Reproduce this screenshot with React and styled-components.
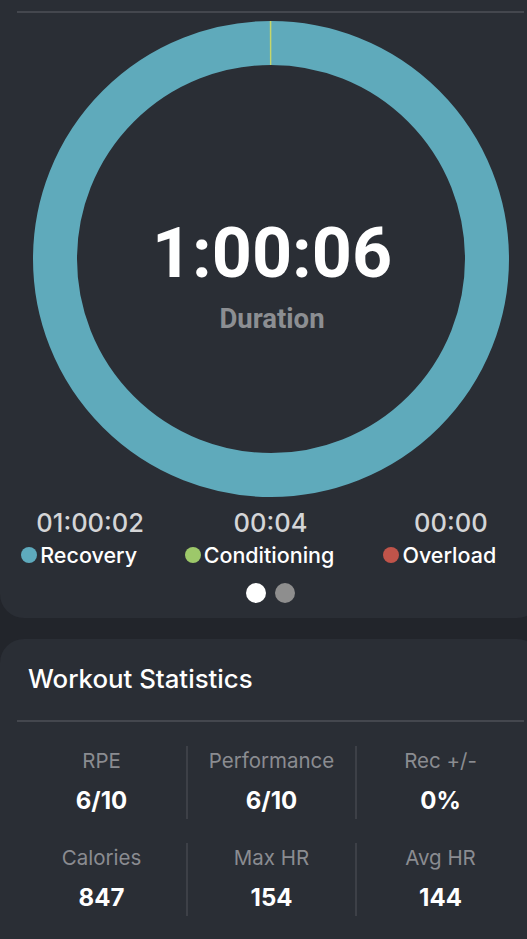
import React from "react";
import styled, { createGlobalStyle } from "styled-components";

const Global = createGlobalStyle`
  html, body { margin: 0; padding: 0; background: #22252b; overflow: hidden; }
  body { font-family: Inter, "Liberation Sans", sans-serif; }
`;

const Page = styled.div`
  width: 541px;
  min-height: 939px;
  background: #22252b;
  display: flex;
  flex-direction: column;
  gap: 21px;
`;

const Card = styled.section`
  background: #2a2e35;
  border-radius: ${(p) => (p.$top ? "24px 24px 0 0" : "0 0 24px 24px")};
  display: flex;
  flex-direction: column;
  flex: ${(p) => (p.$top ? 1 : "none")};
`;

const Divider = styled.div`
  height: 2px;
  background: #44474e;
  margin: 0 17px;
`;

const TopCard = styled(Card)`
  padding: 11px 0 15px;
`;

const RingArea = styled.div`
  display: grid;
  margin-top: 8px;
  justify-items: center;
  & > * { grid-area: 1 / 1; }
`;

const CenterText = styled.div`
  display: flex;
  flex-direction: column;
  align-items: center;
  margin-top: 197px;
  align-self: start;
  font-family: Roboto, "Liberation Sans", sans-serif;
  font-weight: 700;
`;

const Timer = styled.div`
  font-size: 70px;
  line-height: 70px;
  color: #ffffff;
  padding-left: 3px;
`;

const Caption = styled.div`
  margin-top: 17px;
  font-size: 27.5px;
  line-height: 27px;
  color: #8c8e92;
  padding-left: 3px;
`;

const Legend = styled.div`
  display: grid;
  grid-template-columns: repeat(3, 1fr);
  margin-top: 11px;
`;

const LegendItem = styled.div`
  display: flex;
  flex-direction: column;
  align-items: center;
  gap: 3px;
`;

const LegendTime = styled.div`
  font-size: 25.5px;
  line-height: 30px;
  font-weight: 500;
  color: #d4d5d7;
`;

const LegendLabel = styled.div`
  display: flex;
  align-items: center;
  gap: 3px;
  margin-right: 22px;
  font-size: 21.5px;
  line-height: 28px;
  font-weight: 500;
  color: #ffffff;
`;

const Dot = styled.span`
  width: 16px;
  height: 16px;
  border-radius: 50%;
  background: ${(p) => p.$color};
`;

const Pager = styled.div`
  display: flex;
  justify-content: center;
  gap: 9px;
  margin-top: 14px;
`;

const PageDot = styled.span`
  width: 20px;
  height: 20px;
  border-radius: 50%;
  background: ${(p) => (p.$active ? "#ffffff" : "#8e8e8e")};
`;

const Header = styled.h2`
  margin: 0;
  padding: 25px 28px 26px;
  font-size: 25.8px;
  line-height: 30px;
  font-weight: 500;
  color: #ffffff;
`;

const StatGrid = styled.div`
  display: grid;
  grid-template-columns: repeat(3, 1fr);
  row-gap: 24px;
  margin: 24px 17px 0;
`;

const Stat = styled.div`
  display: flex;
  flex-direction: column;
  align-items: center;
  padding: 3px 0 4px;
  border-left: ${(p) => (p.$first ? "none" : "2px solid #3d4047")};
`;

const StatLabel = styled.div`
  font-size: 20.5px;
  line-height: 24px;
  color: #8a8c91;
`;

const StatValue = styled.div`
  margin-top: 14px;
  font-size: 24px;
  line-height: 28px;
  font-weight: 700;
  color: #ffffff;
`;

const legend = [
  { time: "01:00:02", label: "Recovery", color: "#5eaabd" },
  { time: "00:04", label: "Conditioning", color: "#9dc86a" },
  { time: "00:00", label: "Overload", color: "#c0544a" },
];

const stats = [
  { label: "RPE", value: "6/10" },
  { label: "Performance", value: "6/10" },
  { label: "Rec +/-", value: "0%" },
  { label: "Calories", value: "847" },
  { label: "Max HR", value: "154" },
  { label: "Avg HR", value: "144" },
];

function Ring() {
  const r = 216;
  const c = 2 * Math.PI * r;
  const cond = c * (4 / 3606);
  return (
    <svg width="476" height="476" viewBox="0 0 476 476">
      <circle cx="238" cy="238" r={r} fill="none" stroke="#5faabb" strokeWidth="44" />
      <circle
        cx="238"
        cy="238"
        r={r}
        fill="none"
        stroke="#c6d66a"
        strokeWidth="44"
        strokeDasharray={`${Math.max(cond, 1)} ${c}`}
        transform="rotate(-90.3 238 238)"
      />
    </svg>
  );
}

export default function App() {
  return (
    <>
      <Global />
      <Page>
        <TopCard>
          <Divider />
          <RingArea>
            <Ring />
            <CenterText>
              <Timer>1:00:06</Timer>
              <Caption>Duration</Caption>
            </CenterText>
          </RingArea>
          <Legend>
            {legend.map((l) => (
              <LegendItem key={l.label}>
                <LegendTime>{l.time}</LegendTime>
                <LegendLabel>
                  <Dot $color={l.color} />
                  {l.label}
                </LegendLabel>
              </LegendItem>
            ))}
          </Legend>
          <Pager>
            <PageDot $active />
            <PageDot />
          </Pager>
        </TopCard>
        <Card $top>
          <Header>Workout Statistics</Header>
          <Divider />
          <StatGrid>
            {stats.map((s, i) => (
              <Stat key={s.label} $first={i % 3 === 0}>
                <StatLabel>{s.label}</StatLabel>
                <StatValue>{s.value}</StatValue>
              </Stat>
            ))}
          </StatGrid>
        </Card>
      </Page>
    </>
  );
}
